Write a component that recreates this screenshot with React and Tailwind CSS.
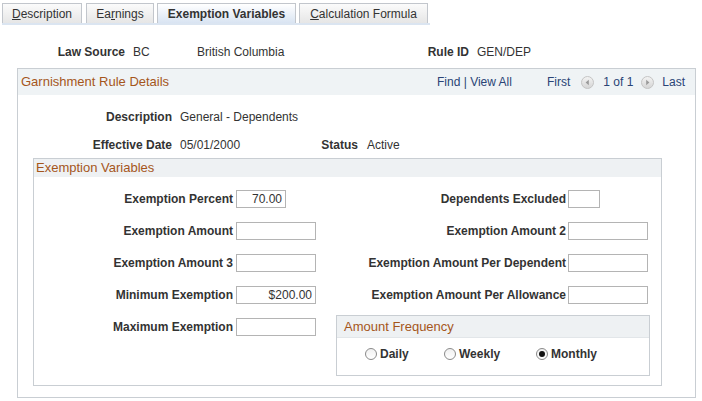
import React from "react";

const FONT = { fontFamily: '"Liberation Sans", Arial, sans-serif' };

function Tab({ width, selected, children }) {
  return (
    <div
      className={
        "flex h-[20px] items-center justify-center border border-b-0 border-[#c2c6cc] " +
        (selected
          ? "bg-gradient-to-b from-white to-[#d9e4f2] font-bold text-[#333]"
          : "bg-gradient-to-b from-[#fbfbfb] to-[#e6e6e6] text-[#333]")
      }
      style={{ width }}
    >
      {children}
    </div>
  );
}

function Field({ width = 80, value = "" }) {
  return (
    <div
      className="h-[18px] border border-[#b4b4b4] bg-white pr-[3px] text-right leading-[16px] text-[#333]"
      style={{ width }}
    >
      {value}
    </div>
  );
}

function Arrow({ dir }) {
  return (
    <svg width="13" height="13" viewBox="0 0 13 13">
      <defs>
        <linearGradient id={"g" + dir} x1="0" y1="0" x2="0" y2="1">
          <stop offset="0" stopColor="#f4f4f4" />
          <stop offset="1" stopColor="#d4d4d4" />
        </linearGradient>
      </defs>
      <circle cx="6.5" cy="6.5" r="6" fill={"url(#g" + dir + ")"} stroke="#c4c4c4" />
      {dir === "left" ? (
        <path d="M7.8 3.8 L4.6 6.5 L7.8 9.2 Z" fill="#9a9a9a" />
      ) : (
        <path d="M5.2 3.8 L8.4 6.5 L5.2 9.2 Z" fill="#9a9a9a" />
      )}
    </svg>
  );
}

function Radio({ checked }) {
  return (
    <span className="flex h-[12px] w-[12px] items-center justify-center rounded-full border border-[#8a8a8a] bg-gradient-to-b from-[#f0f0f0] to-white">
      {checked && <span className="h-[6px] w-[6px] rounded-full bg-[#111]" />}
    </span>
  );
}

function Row({ first, left, leftWidth = 80, leftValue, right, rightWidth = 80 }) {
  return (
    <div className={(first ? "mt-[13px]" : "mt-[14px]") + " flex h-[18px] items-center"}>
      <span className="w-[199px] text-right font-bold">{left}</span>
      <div className="ml-[3px] w-[80px]">
        <Field width={leftWidth} value={leftValue} />
      </div>
      <span className="w-[250px] text-right font-bold">{right}</span>
      <div className="ml-[2px]">
        <Field width={rightWidth} />
      </div>
    </div>
  );
}

export default function App() {
  return (
    <div className="h-[401px] w-[702px] overflow-hidden bg-white text-[12px] text-[#333]" style={FONT}>
      <div className="pl-[2px] pt-[3px]">
        <div className="flex w-[428px] items-end border-b-2 border-[#dbe5f1]">
          <Tab width={80}>
            <span><u>D</u>escription</span>
          </Tab>
          <div className="w-[4px]" />
          <Tab width={68}>
            <span>Ea<u>r</u>nings</span>
          </Tab>
          <div className="w-[3px]" />
          <Tab width={139} selected>
            Exemption Variables
          </Tab>
          <div className="w-[3px]" />
          <Tab width={129}>
            <span><u>C</u>alculation Formula</span>
          </Tab>
        </div>
      </div>

      <div className="mt-[20px] flex h-[14px] items-center leading-[14px]">
        <span className="w-[125px] text-right font-bold">Law Source</span>
        <span className="ml-[8px] w-[64px]">BC</span>
        <span className="w-[180px]">British Columbia</span>
        <span className="w-[92px] text-right font-bold">Rule ID</span>
        <span className="ml-[8px]">GEN/DEP</span>
      </div>

      <div className="ml-[17px] mt-[9px] h-[330px] w-[679px] border border-[#c9ced3]">
        <div className="flex h-[26px] items-center bg-[#eff3f5] pl-[3px] pr-[10px]">
          <span className="text-[13px] text-[#a5561b]">Garnishment Rule Details</span>
          <div className="ml-auto flex items-center text-[#2a4476]">
            <span>Find | View All</span>
            <span className="ml-[35px]">First</span>
            <span className="ml-[11px] flex"><Arrow dir="left" /></span>
            <span className="ml-[9px]">1 of 1</span>
            <span className="ml-[8px] flex"><Arrow dir="right" /></span>
            <span className="ml-[8px]">Last</span>
          </div>
        </div>

        <div className="mt-[15px] flex h-[14px] items-center">
          <span className="w-[154px] text-right font-bold">Description</span>
          <span className="ml-[8px]">General - Dependents</span>
        </div>
        <div className="mt-[14px] flex h-[14px] items-center">
          <span className="w-[154px] text-right font-bold">Effective Date</span>
          <span className="ml-[8px] w-[100px]">05/01/2000</span>
          <span className="w-[78px] text-right font-bold">Status</span>
          <span className="ml-[9px]">Active</span>
        </div>

        <div className="ml-[15px] mt-[6px] h-[228px] w-[629px] border border-[#c9ced3]">
          <div className="flex h-[18px] items-center bg-[#eef1f3] pl-[2px]">
            <span className="text-[13px] text-[#a5561b]">Exemption Variables</span>
          </div>

          <Row first left="Exemption Percent" leftWidth={50} leftValue="70.00" right="Dependents Excluded" rightWidth={32} />
          <Row left="Exemption Amount" right="Exemption Amount 2" />
          <Row left="Exemption Amount 3" right="Exemption Amount Per Dependent" />
          <Row left="Minimum Exemption" leftValue="$200.00" right="Exemption Amount Per Allowance" />

          <div className="mt-[11px] flex items-start">
            <div className="mt-[3px] flex h-[18px] items-center">
              <span className="w-[199px] text-right font-bold">Maximum Exemption</span>
              <div className="ml-[3px] w-[80px]">
                <Field />
              </div>
            </div>
            <div className="ml-[20px] h-[61px] w-[314px] border border-[#c9ced3]">
              <div className="flex h-[22px] items-center border-b border-[#e2e6e9] bg-[#eef1f3] pl-[7px]">
                <span className="text-[13px] text-[#a5561b]">Amount Frequency</span>
              </div>
              <div className="flex h-[36px] items-start pl-[28px] pt-[10px] font-bold">
                <div className="flex h-[12px] items-center">
                  <Radio />
                  <span className="ml-[3px] w-[64px]">Daily</span>
                  <Radio />
                  <span className="ml-[3px] w-[77px]">Weekly</span>
                  <Radio checked />
                  <span className="ml-[3px]">Monthly</span>
                </div>
              </div>
            </div>
          </div>
        </div>
      </div>
    </div>
  );
}
